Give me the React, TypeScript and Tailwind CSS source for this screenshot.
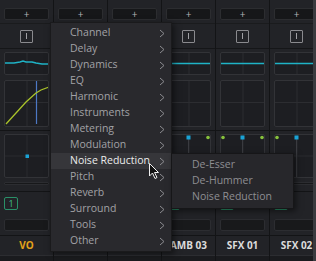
import React from 'react';

const font = { fontFamily: '"Open Sans", "Noto Sans", sans-serif' };

const menuItems = [
  'Channel', 'Delay', 'Dynamics', 'EQ', 'Harmonic', 'Instruments', 'Metering',
  'Modulation', 'Noise Reduction', 'Pitch', 'Reverb', 'Surround', 'Tools', 'Other',
];

// strips 1 and 2 sit under the menu, so their labels are never seen
const strips = [
  { id: 0, name: 'VO', color: 'text-[#e3a21a]', mono: true, shown: true },
  { id: 1, name: '', color: 'text-[#dcdcdc]', mono: false, shown: false },
  { id: 2, name: '', color: 'text-[#dcdcdc]', mono: false, shown: false },
  { id: 3, name: 'AMB 03', color: 'text-[#dcdcdc]', mono: false, shown: false },
  { id: 4, name: 'SFX 01', color: 'text-[#dcdcdc]', mono: false, shown: false },
  { id: 5, name: 'SFX 02', color: 'text-[#dcdcdc]', mono: false, shown: false },
];

function Chevron() {
  return (
    <svg width="6" height="9" viewBox="0 0 6 9" className="shrink-0">
      <polyline points="1,1 5,4.5 1,8" fill="none" stroke="#8c8c90" strokeWidth="1" />
    </svg>
  );
}

function Strip({ s }: { s: (typeof strips)[number] }) {
  return (
    <div className="w-[54px] shrink-0 h-full flex flex-col bg-[#222327] border-r border-[#131416]">
      {/* add button */}
      <div className="h-[24px] px-[4px] pt-[8px] border-b border-[#1a1b1d]">
        <div className="h-[12px] rounded-[2px] bg-[#161719] border border-[#2c2d30] flex items-center justify-center text-[10px] leading-none text-[#b4b4b4]">+</div>
      </div>
      {/* insert */}
      <div className="h-[25px] flex items-center justify-center border-b border-[#151618]">
        <div className="w-[13px] h-[13px] border border-[#8a8a8e] rounded-[1px] flex items-center justify-center">
          <div className="w-px h-[6px] bg-[#a0a0a4]" />
        </div>
      </div>
      {/* eq + dynamics */}
      <div className="h-[82px] px-[4px] pt-[3px] border-b border-[#131416]">
        <div className="h-[23px] rounded-[2px] bg-[#1d1e22] border border-[#323337] relative overflow-hidden">
          <svg width="45" height="23" className="absolute left-[-1px] top-[-1px]">
            <line x1="23" y1="0" x2="23" y2="23" stroke="#2c2d31" />
            {s.mono ? (
              <polyline points="0,11 10,11 16,10 19,9 22,10 28,10 32,11 38,12 45,12" fill="none" stroke="#1fb3c6" strokeWidth="1.5" />
            ) : (
              <line x1="0" y1="11.5" x2="45" y2="11.5" stroke="#1fb3c6" strokeWidth="1.5" />
            )}
          </svg>
        </div>
        <div className="mt-[5px] h-[47px] rounded-[2px] bg-[#1d1e22] border border-[#323337] relative overflow-hidden">
          <svg width="45" height="47" className="absolute left-[-1px] top-[-1px]">
            <line x1="23" y1="0" x2="23" y2="47" stroke="#2c2d31" />
            <line x1="0" y1="22.5" x2="45" y2="22.5" stroke="#2c2d31" />
            {s.mono && (
              <>
                <line x1="32.5" y1="1" x2="32.5" y2="44" stroke="#4d78c4" strokeWidth="1.2" />
                <polyline points="2,44 12,33 22,22 32,13 37,10 45,7" fill="none" stroke="#a9c22a" strokeWidth="1.3" />
              </>
            )}
          </svg>
        </div>
      </div>
      {/* pan */}
      <div className="h-[61px] px-[4px] pt-[3px] border-b border-[#131416]">
        <div className="h-[44px] rounded-[2px] bg-[#1d1e22] border border-[#323337] relative overflow-hidden">
          <svg width="45" height="44" className="absolute left-[-1px] top-[-1px]">
            <line x1="23" y1="0" x2="23" y2="44" stroke="#2a2b2f" />
            <line x1="0" y1="22" x2="45" y2="22" stroke="#2a2b2f" />
            {s.mono ? (
              <rect x="21.5" y="20.5" width="3.5" height="3.5" fill="#1aa3d6" />
            ) : (
              <>
                <line x1="22.5" y1="4" x2="22.5" y2="44" stroke="#3a3b40" />
                <circle cx="3" cy="3.5" r="1.8" fill="#86c03c" />
                <rect x="20.5" y="1.5" width="4" height="4" fill="#1aa3d6" />
                <circle cx="42" cy="3.5" r="1.8" fill="#86c03c" />
              </>
            )}
          </svg>
        </div>
        <div className="mt-[4px] h-[3px] rounded-[1px] bg-[#17181a] border border-[#2c2d31]" />
      </div>
      {/* routing */}
      <div className="h-[44px] px-[4px] pt-[5px] border-b border-[#131416]">
        <div className="w-[14px] h-[13px] rounded-[2px] border border-[#2a9068] flex items-center justify-center text-[9px] leading-none text-[#3fc08c]">
          {s.shown ? '1' : ''}
        </div>
        <div className="mt-[9px] h-[12px] rounded-[2px] bg-[#18191b] border border-[#2c2d31]" />
      </div>
      {/* name */}
      <div className={`h-[19px] flex items-center justify-center text-[10px] font-bold ${s.color}`}>{s.name}</div>
      <div className="h-[6px] bg-[#1a1b1e] border-t border-[#2c2d31]" />
    </div>
  );
}

export default function App() {
  return (
    <div className="w-[316px] h-[261px] overflow-hidden relative bg-[#1c1d20]" style={font}>
      <div className="flex h-full">
        {strips.map((s) => (
          <Strip key={s.id} s={s} />
        ))}
      </div>
      <div className="absolute right-0 top-0 w-[3px] h-full bg-[#3a3b3f]" />

      {/* plugin menu */}
      <div className="absolute left-[50px] top-[22px] w-[122px] h-[230px] bg-[#29292d] border border-[#1a1a1c] pt-[2px] shadow-[2px_2px_6px_rgba(0,0,0,0.5)]">
        {menuItems.map((m) => (
          <div
            key={m}
            className={`h-[16px] flex items-center justify-between pl-[19px] pr-[6px] text-[10.5px] ${
              m === 'Noise Reduction' ? 'bg-[#36363a] text-[#ececec]' : 'text-[#a2a2a6]'
            }`}
          >
            <span>{m}</span>
            <Chevron />
          </div>
        ))}
      </div>

      {/* submenu */}
      <div className="absolute left-[171px] top-[153px] w-[123px] h-[56px] bg-[#27272b] border border-[#161618] pt-[3px] shadow-[2px_2px_6px_rgba(0,0,0,0.5)]">
        {['De-Esser', 'De-Hummer', 'Noise Reduction'].map((m) => (
          <div key={m} className="h-[16px] flex items-center pl-[20px] text-[10.5px] text-[#8e8e92]">
            {m}
          </div>
        ))}
      </div>

      {/* cursor */}
      <svg width="12" height="17" viewBox="0 0 12 17" className="absolute left-[149px] top-[163px]">
        <path d="M0.5 0.5 L0.5 13 L3.5 10 L6 15.5 L8 14.5 L5.5 9.5 L9.5 9.5 Z" fill="#111" stroke="#f0f0f0" strokeWidth="1" />
      </svg>
    </div>
  );
}
